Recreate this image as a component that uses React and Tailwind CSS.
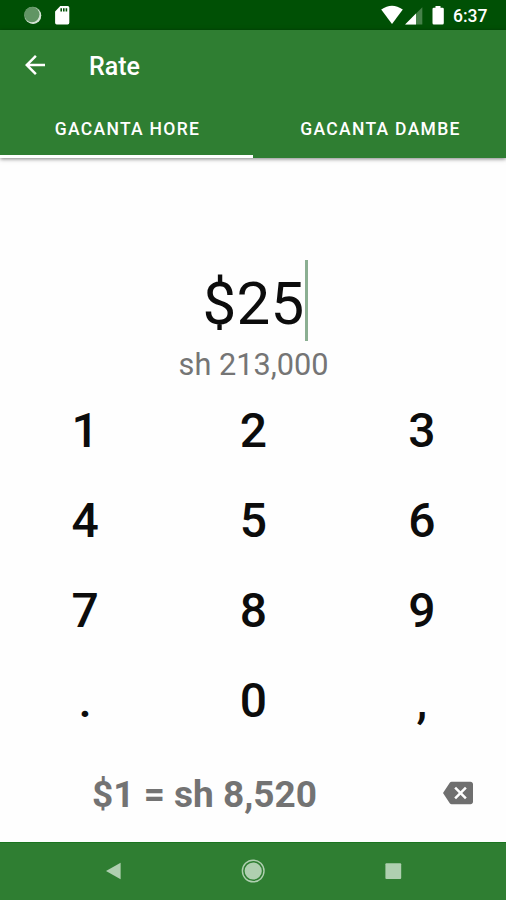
const KEYS = ["1", "2", "3", "4", "5", "6", "7", "8", "9", ".", "0", ","];

function StatusBar() {
  return (
    <div className="flex h-[30px] shrink-0 items-center bg-[#005005] text-white">
      <svg className="h-[30px] w-[80px]" viewBox="0 0 80 30">
        <circle cx="32.7" cy="15.3" r="8.5" fill="#7da680" />
        <circle cx="33.1" cy="15.8" r="8.1" fill="#d5e4d5" />
        <circle cx="31.9" cy="14.6" r="7.6" fill="#619564" />
        <path
          fillRule="evenodd"
          fill="#fff"
          d="M60.3 6H67.7Q69.3 6 69.3 7.6V22.8Q69.3 24.4 67.7 24.4H56.7Q55.1 24.4 55.1 22.8V11.4ZM60.4 8.3V11.6H62V8.3ZM63 8.3V11.6H64.6V8.3ZM65.6 8.3V11.6H67.2V8.3Z"
        />
      </svg>
      <svg className="ml-auto h-[30px] w-[73px]" viewBox="380 0 73 30">
        <path d="M381.2 9.6Q392 1.8 402.8 9.6L392 23.9Z" fill="#fff" />
        <path d="M422.3 7.3V24.5H405.1Z" fill="#468149" />
        <path d="M416 13.6V24.5H405.1Z" fill="#fff" />
        <path
          d="M435.5 6H440.5V7.7H442.5Q443.8 7.7 443.8 9V23Q443.8 24.5 442.5 24.5H433.8Q432.5 24.5 432.5 23V9Q432.5 7.7 433.8 7.7H435.5Z"
          fill="#fff"
        />
      </svg>
      <span className="w-[53px] pt-[2px] text-[17.5px] leading-[28px] font-medium">6:37</span>
    </div>
  );
}

function AppBar() {
  return (
    <header className="z-10 flex h-[128px] shrink-0 flex-col bg-[#2f7e32] text-white shadow-[0_1px_4px_rgba(0,0,0,0.5)]">
      <div className="flex h-[69px] items-center">
        <svg className="ml-[20px] h-[30px] w-[30px]" viewBox="0 0 24 24" fill="currentColor">
          <path d="M20 11H7.83l5.59-5.59L12 4l-8 8 8 8 1.41-1.41L7.83 13H20v-2z" />
        </svg>
        <h1 className="ml-[39px] pt-[4px] text-[25px] leading-[30px] font-medium">Rate</h1>
      </div>
      <div className="grid flex-1 grid-cols-2 text-[17.5px] font-medium tracking-[1.3px]">
        <div className="flex items-center justify-center border-b-[3px] border-white pt-[4px] pl-[2px]">GACANTA HORE</div>
        <div className="flex items-center justify-center border-b-[3px] border-transparent pt-[4px] pl-[2px]">GACANTA DAMBE</div>
      </div>
    </header>
  );
}

function NavBar() {
  return (
    <nav className="flex h-[58px] shrink-0 items-center justify-center gap-[110px] border-t border-[#1a7420] bg-[#2f7e32] pb-px">
      <svg className="h-[30px] w-[30px]" viewBox="0 0 30 30">
        <path d="M8 15L22.6 6.8V23.2Z" fill="#afcfb0" />
      </svg>
      <svg className="h-[30px] w-[30px]" viewBox="0 0 30 30">
        <circle cx="15.2" cy="15" r="10.8" fill="none" stroke="#afcfb0" strokeWidth="1.4" />
        <circle cx="15.2" cy="15" r="8.6" fill="#afcfb0" />
      </svg>
      <svg className="h-[30px] w-[30px]" viewBox="0 0 30 30">
        <rect x="7.4" y="7.2" width="15.8" height="15.8" rx="1" fill="#afcfb0" />
      </svg>
    </nav>
  );
}

export default function App() {
  return (
    <div className="flex h-[900px] w-[506px] flex-col bg-[#fefefe] font-['Roboto',sans-serif]">
      <StatusBar />
      <AppBar />
      <main className="flex flex-1 flex-col">
        <div className="mt-[102px] flex h-[81px] items-center justify-center pl-[4px] text-[60px] leading-[60px] tracking-[0.3px] text-[#0c0c0c]">
          <span className="pt-[6px]">$25</span>
          <span className="h-[81px] w-[3px] bg-[#8baf92]" />
        </div>
        <div className="mt-[1px] pt-[1px] pl-[1px] text-center text-[30.7px] leading-[43px] text-[#757575]">sh 213,000</div>
        <div className="grid grid-cols-3 pl-px text-center text-[48px] leading-[90px] font-medium text-[#0c0c0c]">
          {KEYS.map((k) => (
            <button key={k} type="button" className="h-[90px]">{k}</button>
          ))}
        </div>
        <div className="flex h-[94px] items-center">
          <div className="w-[409px] pt-[3px] text-center text-[37px] leading-[48px] font-bold text-[#737373]">$1 = sh 8,520</div>
          <svg className="ml-[34px] h-[30px] w-[30px]" viewBox="0 0 24 24" fill="#6f6f6f">
            <path d="M22 3H7c-.69 0-1.23.35-1.59.88L0 12l5.41 8.11c.36.53.9.89 1.59.89h15c1.1 0 2-.9 2-2V5c0-1.1-.9-2-2-2zm-3 12.59L17.59 17 14 13.41 10.41 17 9 15.59 12.59 12 9 8.41 10.41 7 14 10.59 17.59 7 19 8.41 15.41 12 19 15.59z" />
          </svg>
        </div>
      </main>
      <NavBar />
    </div>
  );
}
